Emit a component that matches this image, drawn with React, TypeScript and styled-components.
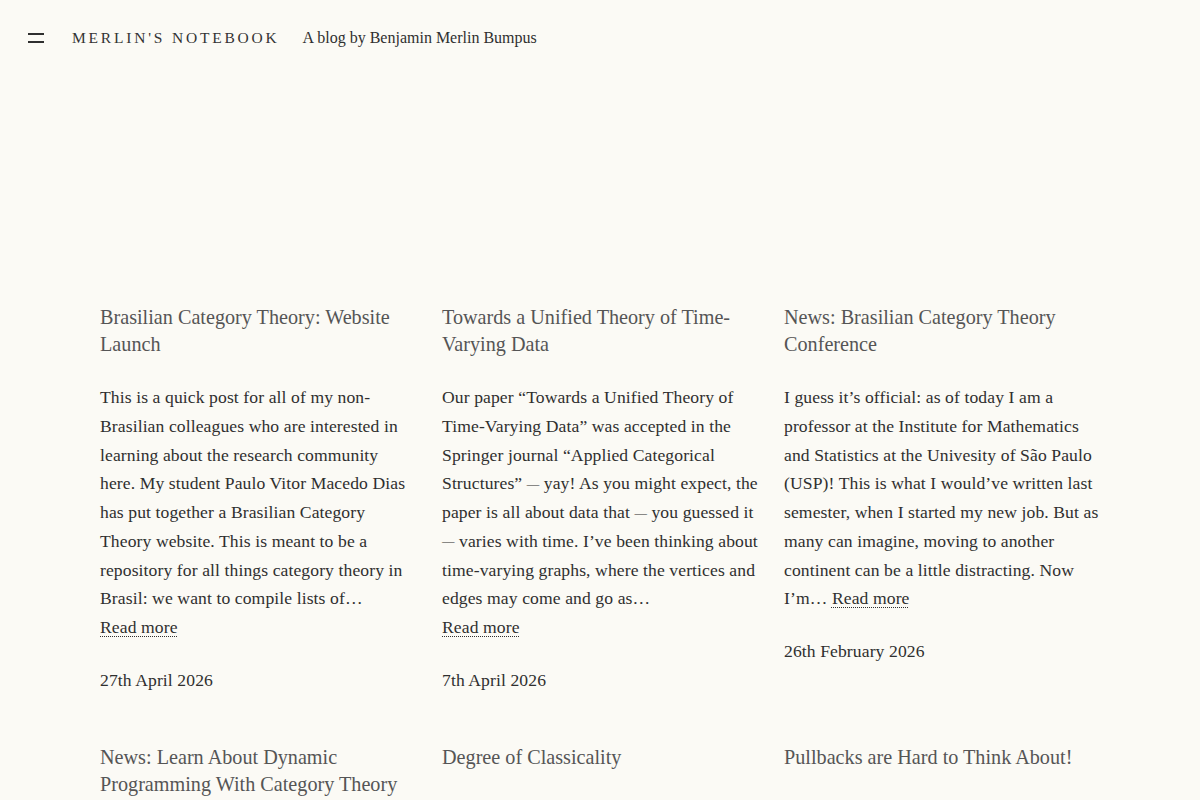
import React from "react";
import styled, { createGlobalStyle } from "styled-components";

const Global = createGlobalStyle`
  html, body {
    margin: 0;
    padding: 0;
    background: #fbfaf5;
    color: #2f2f2f;
    font-family: "Liberation Serif", "Times New Roman", serif;
  }
  * { box-sizing: border-box; }
`;

const Page = styled.div`
  min-height: 800px;
  background: #fbfaf5;
`;

const Header = styled.header`
  display: flex;
  align-items: center;
  height: 76px;
  padding: 0 0 0 28px;
`;

const MenuButton = styled.button`
  display: flex;
  flex-direction: column;
  justify-content: space-between;
  width: 16px;
  height: 10px;
  padding: 0;
  margin: 0 28px 0 0;
  border: 0;
  background: transparent;
  cursor: pointer;
  span {
    display: block;
    height: 2px;
    background: #2f2f2f;
  }
`;

const SiteTitle = styled.a`
  font-size: 15.5px;
  letter-spacing: 2.8px;
  text-transform: uppercase;
  color: #333;
  text-decoration: none;
  margin-right: 23px;
`;

const Tagline = styled.span`
  font-size: 16px;
  color: #2f2f2f;
`;

const Grid = styled.main`
  display: grid;
  grid-template-columns: repeat(3, 316px);
  column-gap: 26px;
  row-gap: 49px;
  padding: 228px 100px 40px;
`;

const Card = styled.article`
  display: flex;
  flex-direction: column;
`;

const Title = styled.h2`
  margin: 0 0 25px;
  font-size: 20.2px;
  font-weight: 400;
  line-height: 27px;
  color: #555;
`;

const Excerpt = styled.p`
  margin: 0;
  font-size: 17.6px;
  letter-spacing: 0.1px;
  line-height: 28.75px;
  color: #2f2f2f;
`;

const Dash = styled.span`
  position: relative;
  top: -1.5px;
  font-size: 12.5px;
  line-height: 1;
  letter-spacing: 0;
`;

const ReadMore = styled.a<{ $block?: boolean }>`
  display: ${(p) => (p.$block ? "block" : "inline")};
  width: fit-content;
  color: #2f2f2f;
  text-decoration: underline dotted;
  text-underline-offset: 3px;
  text-decoration-thickness: 1px;
`;

const DateLine = styled.time`
  display: block;
  margin-top: 24px;
  font-size: 17.6px;
  letter-spacing: 0.1px;
  line-height: 28.75px;
  color: #2f2f2f;
`;

type Post = {
  title: string;
  excerpt?: string;
  inlineMore?: boolean;
  date?: string;
};

const posts: Post[] = [
  {
    title: "Brasilian Category Theory: Website Launch",
    excerpt:
      "This is a quick post for all of my non-Brasilian colleagues who are interested in learning about the research community here. My student Paulo Vitor Macedo Dias has put together a Brasilian Category Theory website. This is meant to be a repository for all things category theory in Brasil: we want to compile lists of…",
    date: "27th April 2026",
  },
  {
    title: "Towards a Unified Theory of Time-Varying Data",
    excerpt:
      "Our paper \u201cTowards a Unified Theory of Time-Varying Data\u201d was accepted in the Springer journal \u201cApplied Categorical Structures\u201d \u2014 yay! As you might expect, the paper is all about data that \u2014 you guessed it \u2014 varies with time. I\u2019ve been thinking about time-varying graphs, where the vertices and edges may come and go as…",
    date: "7th April 2026",
  },
  {
    title: "News: Brasilian Category Theory Conference",
    excerpt:
      "I guess it\u2019s official: as of today I am a professor at the Institute for Mathematics and Statistics at the Univesity of S\u00e3o Paulo (USP)! This is what I would\u2019ve written last semester, when I started my new job. But as many can imagine, moving to another continent can be a little distracting. Now I\u2019m…",
    inlineMore: true,
    date: "26th February 2026",
  },
  { title: "News: Learn About Dynamic Programming With Category Theory" },
  { title: "Degree of Classicality" },
  { title: "Pullbacks are Hard to Think About!" },
];

function withDashes(text: string) {
  return text.split("\u2014").map((part, i) => (
    <React.Fragment key={i}>
      {i > 0 && <Dash>{"\u2014"}</Dash>}
      {part}
    </React.Fragment>
  ));
}

export default function App() {
  return (
    <Page>
      <Global />
      <Header>
        <MenuButton aria-label="Menu">
          <span />
          <span />
        </MenuButton>
        <SiteTitle href="#">Merlin's Notebook</SiteTitle>
        <Tagline>A blog by Benjamin Merlin Bumpus</Tagline>
      </Header>
      <Grid>
        {posts.map((p) => (
          <Card key={p.title}>
            <Title>{p.title}</Title>
            {p.excerpt && (
              <Excerpt>
                {withDashes(p.excerpt)}
                {p.inlineMore ? (
                  <>
                    {" "}
                    <ReadMore href="#">Read more</ReadMore>
                  </>
                ) : (
                  <ReadMore href="#" $block>
                    Read more
                  </ReadMore>
                )}
              </Excerpt>
            )}
            {p.date && <DateLine>{p.date}</DateLine>}
          </Card>
        ))}
      </Grid>
    </Page>
  );
}
